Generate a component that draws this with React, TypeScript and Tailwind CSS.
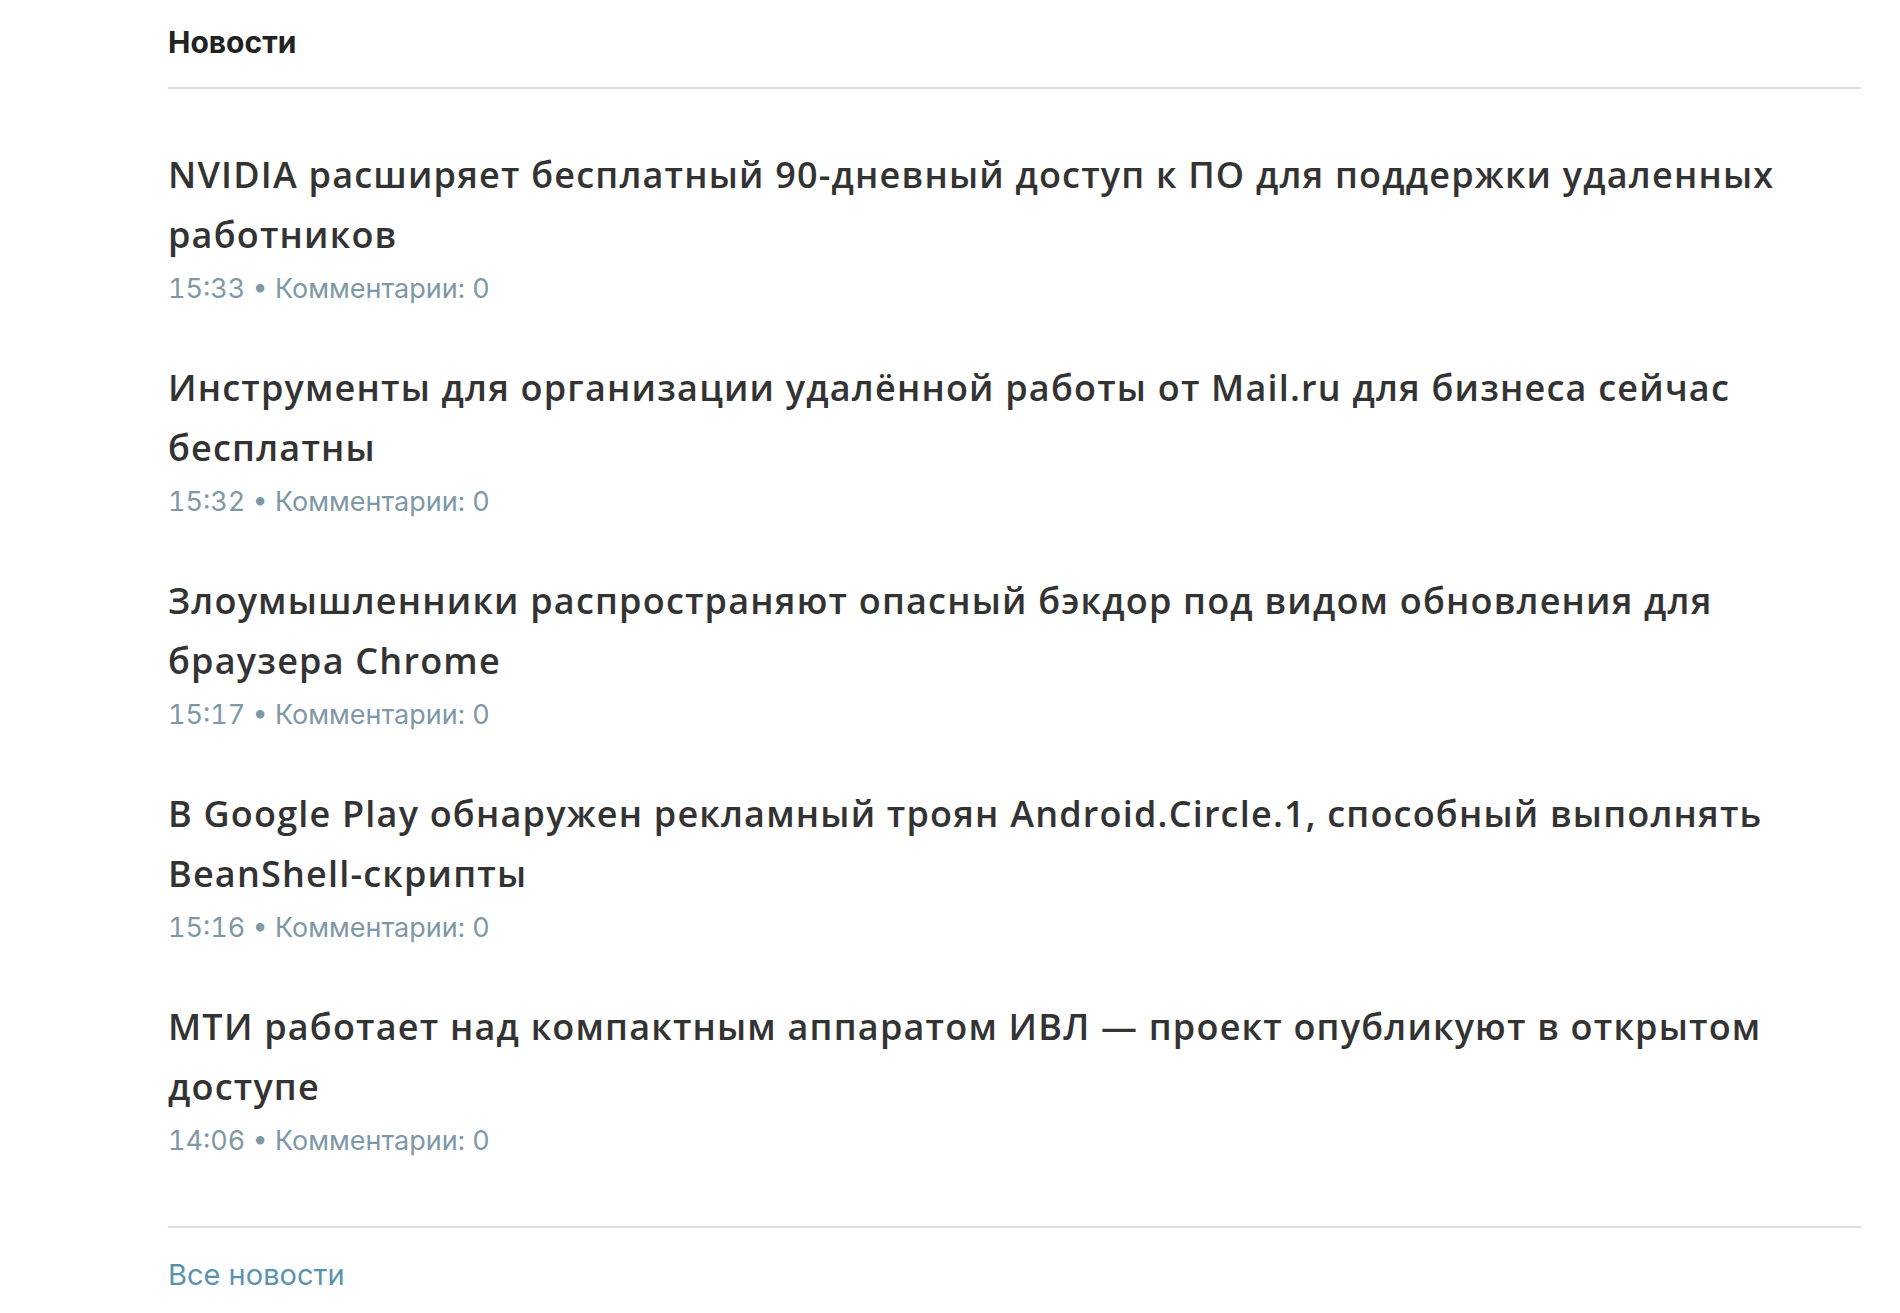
const news = [
  {
    title: "NVIDIA расширяет бесплатный 90-дневный доступ к ПО для поддержки удаленных работников",
    time: "15:33",
    comments: 0,
  },
  {
    title: "Инструменты для организации удалённой работы от Mail.ru для бизнеса сейчас бесплатны",
    time: "15:32",
    comments: 0,
  },
  {
    title: "Злоумышленники распространяют опасный бэкдор под видом обновления для браузера Chrome",
    time: "15:17",
    comments: 0,
  },
  {
    title: "В Google Play обнаружен рекламный троян Android.Circle.1, способный выполнять BeanShell-скрипты",
    time: "15:16",
    comments: 0,
  },
  {
    title: "МТИ работает над компактным аппаратом ИВЛ — проект опубликуют в открытом доступе",
    time: "14:06",
    comments: 0,
  },
];

export default function App() {
  return (
    <main className="min-h-screen bg-white pl-[168px] pr-[39px]">
      {/* Header */}
      <div className="pt-7 pb-[31px] border-b-2 border-[#d7e1e5]">
        <h2 className="text-[30px] leading-7 font-bold text-[#222] font-['Inter',sans-serif]">
          Новости
        </h2>
      </div>

      {/* News list */}
      <ul className="pt-[56px] pb-[71px] flex flex-col gap-[55px]">
        {news.map((item) => (
          <li key={item.time}>
            <a
              href="#"
              className="block text-[36px] leading-[60px] tracking-[1.2px] font-semibold text-[#333] font-['Open_Sans',sans-serif]"
            >
              {item.title}
            </a>
            <div className="mt-[10px] text-[27px] leading-7 tabular-nums text-[#7f98a6] font-['Inter',sans-serif]">
              {item.time} • Комментарии: {item.comments}
            </div>
          </li>
        ))}
      </ul>

      {/* Footer */}
      <div className="border-t-2 border-[#d7e1e5] pt-[33px]">
        <a href="#" className="text-[29px] leading-7 text-[#5b93ad] font-['Inter',sans-serif]">
          Все новости
        </a>
      </div>
    </main>
  );
}
